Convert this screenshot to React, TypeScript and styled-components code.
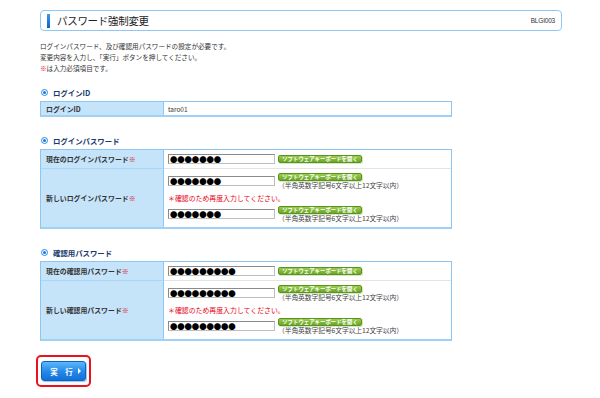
import React from "react";
import styled, { createGlobalStyle } from "styled-components";

const GlobalStyle = createGlobalStyle`
  html, body {
    margin: 0;
    padding: 0;
    background: #ffffff;
  }
  body {
    font-family: "Noto Sans CJK JP", "Liberation Sans", sans-serif;
    color: #333333;
  }
`;

const Page = styled.div`
  width: 600px;
  height: 398px;
  padding: 10px 0 0 40px;
  box-sizing: border-box;
  overflow: hidden;
`;

const TitleBar = styled.div`
  width: 522px;
  height: 21px;
  box-sizing: border-box;
  border: 1px solid #8fc8f5;
  border-radius: 4px;
  display: flex;
  align-items: center;
  padding: 0 6px 0 6px;
`;

const TitleMark = styled.span`
  width: 3px;
  height: 14px;
  background: linear-gradient(#3a9af0, #0b64c8);
  margin-right: 7px;
`;

const Title = styled.h1`
  margin: 0;
  flex: 1;
  font-size: 10.5px;
  font-weight: normal;
  color: #222222;
  letter-spacing: -0.3px;
`;

const ScreenId = styled.span`
  font-family: "Liberation Sans", Arial, sans-serif;
  font-size: 6.5px;
  color: #333333;
  letter-spacing: -0.2px;
`;

const Intro = styled.div`
  margin-top: 10px;
  font-size: 6.6px;
  line-height: 11px;
  color: #333333;
`;

const Req = styled.span`
  color: #e60012;
`;

const SectionHead = styled.h2<{ $gap?: number }>`
  margin: ${(p) => p.$gap ?? 12}px 0 3px 0;
  height: 12px;
  display: flex;
  align-items: center;
  font-size: 7.4px;
  font-weight: bold;
  color: #17396e;
`;

const Radio = styled.span`
  width: 5px;
  height: 5px;
  border-radius: 50%;
  border: 1px solid #2c8be8;
  margin: 0 5px 0 1px;
  display: flex;
  align-items: center;
  justify-content: center;
  &::after {
    content: "";
    width: 3px;
    height: 3px;
    border-radius: 50%;
    background: #1c78dc;
  }
`;

const Table = styled.div`
  width: 412px;
  display: grid;
  grid-template-columns: 123px 1fr;
  border: 1px solid #8cc6f2;
  border-bottom: 2px solid #9fd0f6;
  box-sizing: border-box;
`;

const Label = styled.div<{ $h: number; $first?: boolean }>`
  height: ${(p) => p.$h}px;
  background: #c5e4fa;
  border-right: 1px solid #8cc6f2;
  border-top: ${(p) => (p.$first ? "none" : "1px solid #a9d6f7")};
  box-sizing: border-box;
  display: flex;
  align-items: center;
  padding-left: 5px;
  font-size: 6.9px;
  font-weight: bold;
  color: #333333;
`;

const Value = styled.div<{ $h: number; $first?: boolean; $stack?: boolean }>`
  height: ${(p) => p.$h}px;
  border-top: ${(p) => (p.$first ? "none" : "1px solid #e3e3e3")};
  box-sizing: border-box;
  display: flex;
  flex-direction: ${(p) => (p.$stack ? "column" : "row")};
  align-items: ${(p) => (p.$stack ? "flex-start" : "center")};
  padding: ${(p) => (p.$stack ? "4px 0 0 4px" : "0 0 0 4px")};
  font-size: 6.5px;
`;

const Group = styled.div`
  display: flex;
  align-items: flex-start;
  height: 17px;
`;

const PassBox = styled.div<{ $top?: number }>`
  width: 107px;
  height: 10px;
  box-sizing: border-box;
  margin-top: ${(p) => p.$top ?? 0}px;
  border: 1px solid #bdbdbd;
  border-top-color: #8a8a8a;
  border-left-color: #8a8a8a;
  background: #ffffff;
  display: flex;
  align-items: center;
  padding-left: 1px;
  font-size: 7.4px;
  line-height: 1;
  color: #000000;
  letter-spacing: -0.1px;
  overflow: hidden;
`;

const Side = styled.div`
  margin-left: 3px;
  display: flex;
  flex-direction: column;
`;

const KeyButton = styled.span`
  width: 84px;
  height: 8px;
  box-sizing: border-box;
  border: 1px solid #5b9320;
  border-radius: 2px;
  background: linear-gradient(#9ccd4c, #6aa52a);
  color: #ffffff;
  font-size: 5.3px;
  font-weight: bold;
  display: flex;
  align-items: center;
  justify-content: center;
  letter-spacing: 0.1px;
  box-shadow: 1px 1px 0 #d5e8bf;
`;

const Note = styled.span`
  font-size: 6.8px;
  line-height: 9px;
  color: #444444;
  letter-spacing: -0.1px;
  white-space: nowrap;
`;

const Warn = styled.div`
  height: 16px;
  display: flex;
  align-items: center;
  font-size: 6.9px;
  color: #e60012;
`;

const SubmitFrame = styled.div`
  margin: 14px 0 0 -4px;
  width: 55px;
  height: 32px;
  box-sizing: border-box;
  border: 2px solid #e8131b;
  border-radius: 5px;
  display: flex;
  align-items: center;
  justify-content: center;
`;

const SubmitButton = styled.button`
  width: 45px;
  height: 20px;
  border: 1px solid #0d63c4;
  border-radius: 3px;
  background: linear-gradient(#5cb8f8, #2387ea 55%, #1470d6);
  color: #ffffff;
  font-family: "Noto Sans CJK JP", sans-serif;
  font-size: 7.5px;
  font-weight: bold;
  display: flex;
  align-items: center;
  justify-content: center;
  gap: 5px;
  padding: 0 0 0 4px;
  box-shadow: 1px 1px 1px #9cc4ea;
  cursor: pointer;
`;

const Arrow = styled.span`
  width: 0;
  height: 0;
  border-left: 3px solid #ffffff;
  border-top: 3px solid transparent;
  border-bottom: 3px solid transparent;
`;

const NOTE = "（半角英数字記号6文字以上12文字以内）";
const KEYBOARD = "ソフトウェアキーボードを開く";

function PasswordPair({ label, newLabel, dots }: { label: string; newLabel: string; dots: string }) {
  return (
    <Table>
      <Label $h={18} $first>
        {label}
        <Req>※</Req>
      </Label>
      <Value $h={18} $first>
        <PassBox>{dots}</PassBox>
        <Side>
          <KeyButton>{KEYBOARD}</KeyButton>
        </Side>
      </Value>
      <Label $h={59}>
        {newLabel}
        <Req>※</Req>
      </Label>
      <Value $h={59} $stack>
        <Group>
          <PassBox $top={3}>{dots}</PassBox>
          <Side>
            <KeyButton>{KEYBOARD}</KeyButton>
            <Note>{NOTE}</Note>
          </Side>
        </Group>
        <Warn>＊確認のため再度入力してください。</Warn>
        <Group>
          <PassBox $top={3}>{dots}</PassBox>
          <Side>
            <KeyButton>{KEYBOARD}</KeyButton>
            <Note>{NOTE}</Note>
          </Side>
        </Group>
      </Value>
    </Table>
  );
}

export default function App() {
  return (
    <>
      <GlobalStyle />
      <Page>
        <TitleBar>
          <TitleMark />
          <Title>パスワード強制変更</Title>
          <ScreenId>BLGI003</ScreenId>
        </TitleBar>

        <Intro>
          ログインパスワード、及び確認用パスワードの設定が必要です。
          <br />
          変更内容を入力し、「実行」ボタンを押してください。
          <br />
          <Req>※</Req>は入力必須項目です。
        </Intro>

        <SectionHead>
          <Radio />
          ログインID
        </SectionHead>
        <Table>
          <Label $h={13} $first>
            ログインID
          </Label>
          <Value $h={13} $first>
            taro01
          </Value>
        </Table>

        <SectionHead $gap={17}>
          <Radio />
          ログインパスワード
        </SectionHead>
        <PasswordPair label="現在のログインパスワード" newLabel="新しいログインパスワード" dots="●●●●●●●" />

        <SectionHead $gap={17}>
          <Radio />
          確認用パスワード
        </SectionHead>
        <PasswordPair label="現在の確認用パスワード" newLabel="新しい確認用パスワード" dots="●●●●●●●●●" />

        <SubmitFrame>
          <SubmitButton>
            実　行
            <Arrow />
          </SubmitButton>
        </SubmitFrame>
      </Page>
    </>
  );
}
